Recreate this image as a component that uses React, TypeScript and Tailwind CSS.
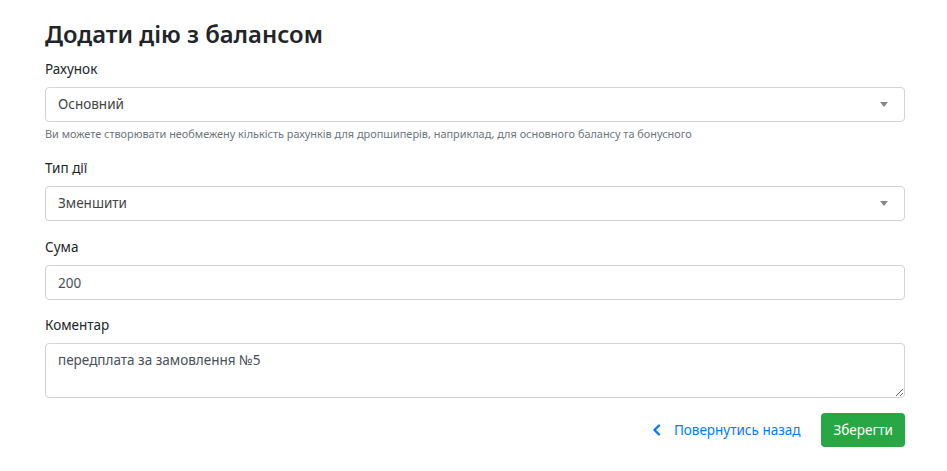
import React from 'react';

const SelectBox: React.FC<{ value: string }> = ({ value }) => (
  <div className="flex h-[35px] items-center justify-between rounded border border-[#ced4da] bg-white pl-3 pr-4 text-[13.5px] text-[#444]">
    <span>{value}</span>
    <span className="h-0 w-0 border-x-4 border-t-[5px] border-x-transparent border-t-[#888]" />
  </div>
);

const Label: React.FC<{ children: React.ReactNode }> = ({ children }) => (
  <label className="mb-2 block h-5 text-[13.5px] leading-5 text-[#212529]">{children}</label>
);

export default function App() {
  return (
    <div
      className="min-h-[471px] bg-white text-[#212529]"
      style={{ fontFamily: '"Segoe UI", "Noto Sans", Roboto, sans-serif' }}
    >
      <div className="ml-[45px] w-[860px] pt-[18px]">
        {/* Header */}
        <h3 className="mb-2 text-[23.8px] font-semibold leading-[33px] text-[#212529]">
          Додати дію з балансом
        </h3>

        {/* Account */}
        <div className="mb-4">
          <Label>Рахунок</Label>
          <SelectBox value="Основний" />
          <p className="mt-1 h-4 text-[10.9px] leading-4 text-[#6c757d]">
            Ви можете створювати необмежену кількість рахунків для дропшиперів, наприклад, для основного балансу та бонусного
          </p>
        </div>

        {/* Action type */}
        <div className="mb-4">
          <Label>Тип дії</Label>
          <SelectBox value="Зменшити" />
        </div>

        {/* Amount */}
        <div className="mb-[15px]">
          <Label>Сума</Label>
          <input
            type="text"
            defaultValue="200"
            className="block h-[35px] w-full rounded border border-[#ced4da] px-3 text-[13.5px] text-[#495057] outline-none"
          />
        </div>

        {/* Comment */}
        <div className="mb-[15px]">
          <Label>Коментар</Label>
          <textarea
            defaultValue="передплата за замовлення №5"
            className="block h-[55px] w-full rounded border border-[#ced4da] px-3 py-[6px] text-[13.5px] leading-5 text-[#495057] outline-none"
          />
        </div>

        {/* Actions */}
        <div className="flex items-center justify-end">
          <a href="#" className="mr-[21px] flex items-center text-[13.5px] text-[#007bff]">
            <svg width="9" height="12" viewBox="0 0 9 12" className="mr-[13px]">
              <path d="M7 1.5 L2.5 6 L7 10.5" fill="none" stroke="#007bff" strokeWidth="2.4" strokeLinecap="round" strokeLinejoin="round" />
            </svg>
            Повернутись назад
          </a>
          <button className="h-[34px] rounded bg-[#28a745] px-3 text-[13.5px] text-white">
            Зберегти
          </button>
        </div>
      </div>
    </div>
  );
}
